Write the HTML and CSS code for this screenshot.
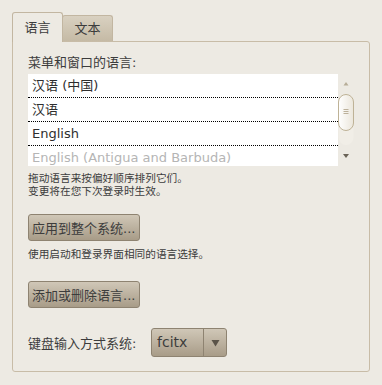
FILE: index.html
```html
<!DOCTYPE html>
<html lang="zh-CN">
<head>
    <meta charset="UTF-8">
    <title>语言支持</title>
    <link rel="stylesheet" href="styles.css">
</head>
<body>
    <div class="tabs">
        <div class="tab active">语言</div>
        <div class="tab">文本</div>
    </div>

    <div class="panel">
        <div class="label">菜单和窗口的语言:</div>

        <div class="list-wrap">
            <ul class="lang-list">
                <li>汉语 (中国)</li>
                <li>汉语</li>
                <li>English</li>
                <li class="dim">English (Antigua and Barbuda)</li>
            </ul>
            <!-- scrollbar -->
            <svg class="scrollbar" width="16" height="92" viewBox="0 0 16 92">
                <defs>
                    <linearGradient id="thumb" x1="0" y1="0" x2="1" y2="0">
                        <stop offset="0" stop-color="#ffffff"/>
                        <stop offset="1" stop-color="#ebe6db"/>
                    </linearGradient>
                </defs>
                <polygon points="5.5,11.5 10.5,11.5 8,8" fill="#b7ad98"/>
                <rect x="0.5" y="20" width="15" height="51" rx="7.5" fill="#f1eee7"/>
                <rect x="0.5" y="20.5" width="15" height="36" rx="7.5" fill="url(#thumb)" stroke="#beb296"/>
                <path d="M5.5 35.5h5M5.5 37.5h5M5.5 39.5h5" stroke="#bcb19b"/>
                <polygon points="5,80 11,80 8,84" fill="#6a6357"/>
            </svg>
        </div>

        <p class="hint">拖动语言来按偏好顺序排列它们。<br>变更将在您下次登录时生效。</p>

        <button class="btn btn-first">应用到整个系统...</button>

        <p class="hint hint-apply">使用启动和登录界面相同的语言选择。</p>

        <button class="btn btn-second">添加或删除语言...</button>

        <div class="im-row">
            <span class="im-label">键盘输入方式系统:</span>
            <div class="combo">
                <span class="combo-value">fcitx</span>
                <span class="combo-arrow">
                    <svg width="9" height="8" viewBox="0 0 9 8"><polygon points="0.5,1 8.5,1 4.5,7.5" fill="#5a5348"/></svg>
                </span>
            </div>
        </div>
    </div>
</body>
</html>
```

FILE: styles.css
```css
body {
    margin: 0;
    padding: 12px 12px 0;
    background-color: #edeae3;
    font-family: "DejaVu Sans", "Noto Sans CJK SC", sans-serif;
    font-size: 13px;
    color: #3c3c3c;
}

.tabs {
    display: flex;
    align-items: flex-end;
    height: 29px;
}

.tab {
    box-sizing: border-box;
    width: 51px;
    height: 26px;
    margin-left: -1px;
    border: 1px solid #c2b6a1;
    border-bottom: none;
    border-radius: 3px 3px 0 0;
    background: linear-gradient(#d9d1c1, #c5baa5);
    display: flex;
    align-items: center;
    justify-content: center;
    line-height: 1;
}

.tab.active {
    height: 30px;
    margin-left: 0;
    margin-bottom: -1px;
    background: #edeae3;
    position: relative;
    z-index: 1;
}

.panel {
    box-sizing: border-box;
    height: 331px;
    border: 1px solid #c8bca7;
    border-radius: 0 3px 3px 3px;
    padding: 13px 15px 0;
}

.label {
    line-height: 16px;
    height: 16px;
    margin-bottom: 3px;
}

.list-wrap {
    display: flex;
    height: 92px;
}

.lang-list {
    width: 310px;
    margin: 0;
    padding: 0;
    list-style: none;
    background-color: #fff;
    overflow: hidden;
}

.lang-list li {
    height: 23px;
    line-height: 23px;
    padding-left: 4px;
    border-bottom: 1px dotted #000;
    color: #2e2e2e;
    white-space: nowrap;
}

.lang-list li.dim {
    color: #b5b5b5;
    border-bottom: none;
}

.scrollbar {
    display: block;
    flex: none;
}

.hint {
    margin: 6px 0 0;
    font-size: 10.67px;
    line-height: 13px;
}

.hint-apply {
    margin-top: 7px;
}

.btn {
    display: block;
    box-sizing: border-box;
    width: 112px;
    height: 27px;
    padding: 0 3px;
    border: 1px solid #8e8371;
    border-radius: 3px;
    background: linear-gradient(#d0c7b7, #a89c88);
    font: inherit;
    color: #3c3c3c;
    text-align: left;
    white-space: nowrap;
    overflow: hidden;
}

.btn-first {
    margin-top: 16px;
}

.btn-second {
    margin-top: 20px;
}

.im-row {
    display: flex;
    align-items: center;
    margin-top: 20px;
}

.im-label {
    flex: none;
    width: 123px;
}

.combo {
    box-sizing: border-box;
    display: flex;
    width: 76px;
    height: 29px;
    border: 1px solid #8e8371;
    border-radius: 3px;
    background: linear-gradient(#d0c7b7, #a89c88);
}

.combo-value {
    flex: 1;
    padding-left: 5px;
    line-height: 27px;
    font-size: 14px;
}

.combo-arrow {
    width: 22px;
    border-left: 1px solid #8e8371;
    display: flex;
    align-items: center;
    justify-content: center;
}

.combo-arrow svg {
    display: block;
}
```
